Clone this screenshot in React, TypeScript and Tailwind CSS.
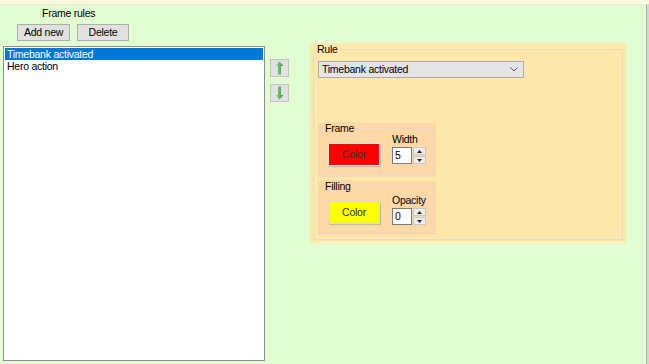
import React from "react";

const font = { fontFamily: '"Liberation Sans", Arial, sans-serif' };

function Arrow({ up }: { up: boolean }) {
  return (
    <svg width="9" height="14" viewBox="0 0 9 14">
      <defs>
        <linearGradient id={up ? "gu" : "gd"} x1="0" x2="1" y1="0" y2="0">
          <stop offset="0" stopColor="#a8dca4" />
          <stop offset="0.5" stopColor="#5cb85a" />
          <stop offset="1" stopColor="#3a9a3a" />
        </linearGradient>
      </defs>
      {up ? (
        <path d="M4.5 0.5 L8.5 5 L6 5 L6 13.5 L3 13.5 L3 5 L0.5 5 Z" fill="url(#gu)" />
      ) : (
        <path d="M4.5 13.5 L8.5 9 L6 9 L6 0.5 L3 0.5 L3 9 L0.5 9 Z" fill="url(#gd)" />
      )}
    </svg>
  );
}

function Spinner({ value }: { value: string }) {
  return (
    <div className="flex h-[17px]">
      <div className="w-[20px] h-[17px] bg-white border border-[#7a7a7a] text-[10.5px] leading-[15px] pl-[2px] text-black">
        {value}
      </div>
      <div className="flex flex-col w-[13px] h-[17px] ml-[1px]">
        <div className="h-[8px] bg-[#ececec] border border-[#c8c8c8] flex items-center justify-center">
          <svg width="5" height="3" viewBox="0 0 5 3"><path d="M0 3 L2.5 0 L5 3 Z" fill="#222" /></svg>
        </div>
        <div className="h-[8px] mt-[1px] bg-[#ececec] border border-[#c8c8c8] flex items-center justify-center">
          <svg width="5" height="3" viewBox="0 0 5 3"><path d="M0 0 L2.5 3 L5 0 Z" fill="#222" /></svg>
        </div>
      </div>
    </div>
  );
}

function SubGroup({
  title,
  color,
  label,
  value,
  labelTop,
}: {
  title: string;
  color: string;
  label: string;
  value: string;
  labelTop: string;
}) {
  return (
    <div className="w-[118px] h-[54px] bg-[#ffd8a8] pt-[5px] px-[1px] pb-[1px]">
      <div className="relative h-full border border-[#e6d8c6]">
        <div className="absolute left-[4px] top-[-7px] bg-[#ffd8a8] px-[1px] text-[10.5px] leading-[13px] text-black">
          {title}
        </div>
        <div className="flex">
          <div
            className="ml-[8px] mt-[14px] w-[52px] h-[23px] border border-[#dcdcdc] shadow-[1px_1px_0_#b8b8b8] flex items-center justify-center text-[10.5px] text-[#333]"
            style={{ backgroundColor: color }}
          >
            Color
          </div>
          <div className={`ml-[12px] flex flex-col ${labelTop}`}>
            <div className="text-[10.5px] leading-[13px] text-black">{label}</div>
            <div className="mt-[1px]">
              <Spinner value={value} />
            </div>
          </div>
        </div>
      </div>
    </div>
  );
}

export default function App() {
  return (
    <div className="w-[649px] h-[364px] flex flex-col bg-[#fff8dc] overflow-hidden tracking-[-0.25px]" style={font}>
      <div className="h-[4px] shrink-0" />
      <div className="flex flex-1 min-h-0">
        <div className="flex-1 bg-[#e3fdd3] border-t border-[#e8ecd8] border-r border-r-[#b0b0b0] flex flex-col">
          <div className="mt-[2px] ml-[42px] h-[13px] text-[10.5px] leading-[13px] text-black">Frame rules</div>
          <div className="mt-[4px] ml-[17px] flex gap-[7px]">
            <div className="w-[53px] h-[17px] bg-[#e1e1e1] border border-[#adadad] text-[10.5px] leading-[15px] text-center text-black">
              Add new
            </div>
            <div className="w-[52px] h-[17px] bg-[#e1e1e1] border border-[#adadad] text-[10.5px] leading-[15px] text-center text-black">
              Delete
            </div>
          </div>
          <div className="mt-[2px] flex items-start">
            <div className="ml-[3px] mt-[3px] w-[262px] h-[315px] bg-white border border-[#8a8f98] p-[1px]">
              <div className="h-[12px] bg-[#0078d7] text-white text-[10.5px] leading-[12px] pl-[2px]">Timebank activated</div>
              <div className="h-[13px] text-black text-[10.5px] leading-[13px] pl-[2px]">Hero action</div>
            </div>
            <div className="ml-[5px] mt-[16px] flex flex-col gap-[7px]">
              <div className="w-[19px] h-[18px] bg-[#e1e1e1] border border-[#c4c4c4] flex items-center justify-center">
                <Arrow up />
              </div>
              <div className="w-[19px] h-[18px] bg-[#e1e1e1] border border-[#c4c4c4] flex items-center justify-center">
                <Arrow up={false} />
              </div>
            </div>
            <div className="ml-[21px] w-[316px] h-[200px] bg-[#ffe8aa] pt-[6px] px-[3px] pb-[3px]">
              <div className="relative h-full border border-[#e6dcc4]">
                <div className="absolute left-[2px] top-[-7px] bg-[#ffe8aa] px-[1px] text-[10.5px] leading-[13px] text-black">
                  Rule
                </div>
                <div className="ml-[4px] mt-[11px] w-[206px] h-[17px] bg-[#e5e5e5] border border-[#adadad] flex items-center justify-between pl-[3px] pr-[5px]">
                  <span className="text-[10.5px] leading-[15px] text-black">Timebank activated</span>
                  <svg width="8" height="5" viewBox="0 0 8 5">
                    <path d="M0.5 0.5 L4 4 L7.5 0.5" fill="none" stroke="#555" strokeWidth="1" />
                  </svg>
                </div>
                <div className="ml-[4px] mt-[45px] flex flex-col gap-[4px]">
                  <SubGroup title="Frame" color="#ff0000" label="Width" value="5" labelTop="mt-[4px]" />
                  <SubGroup title="Filling" color="#ffff00" label="Opacity" value="0" labelTop="mt-[7px]" />
                </div>
              </div>
            </div>
          </div>
        </div>
        <div className="w-[2px] bg-[#d6d6d6]" />
      </div>
    </div>
  );
}
